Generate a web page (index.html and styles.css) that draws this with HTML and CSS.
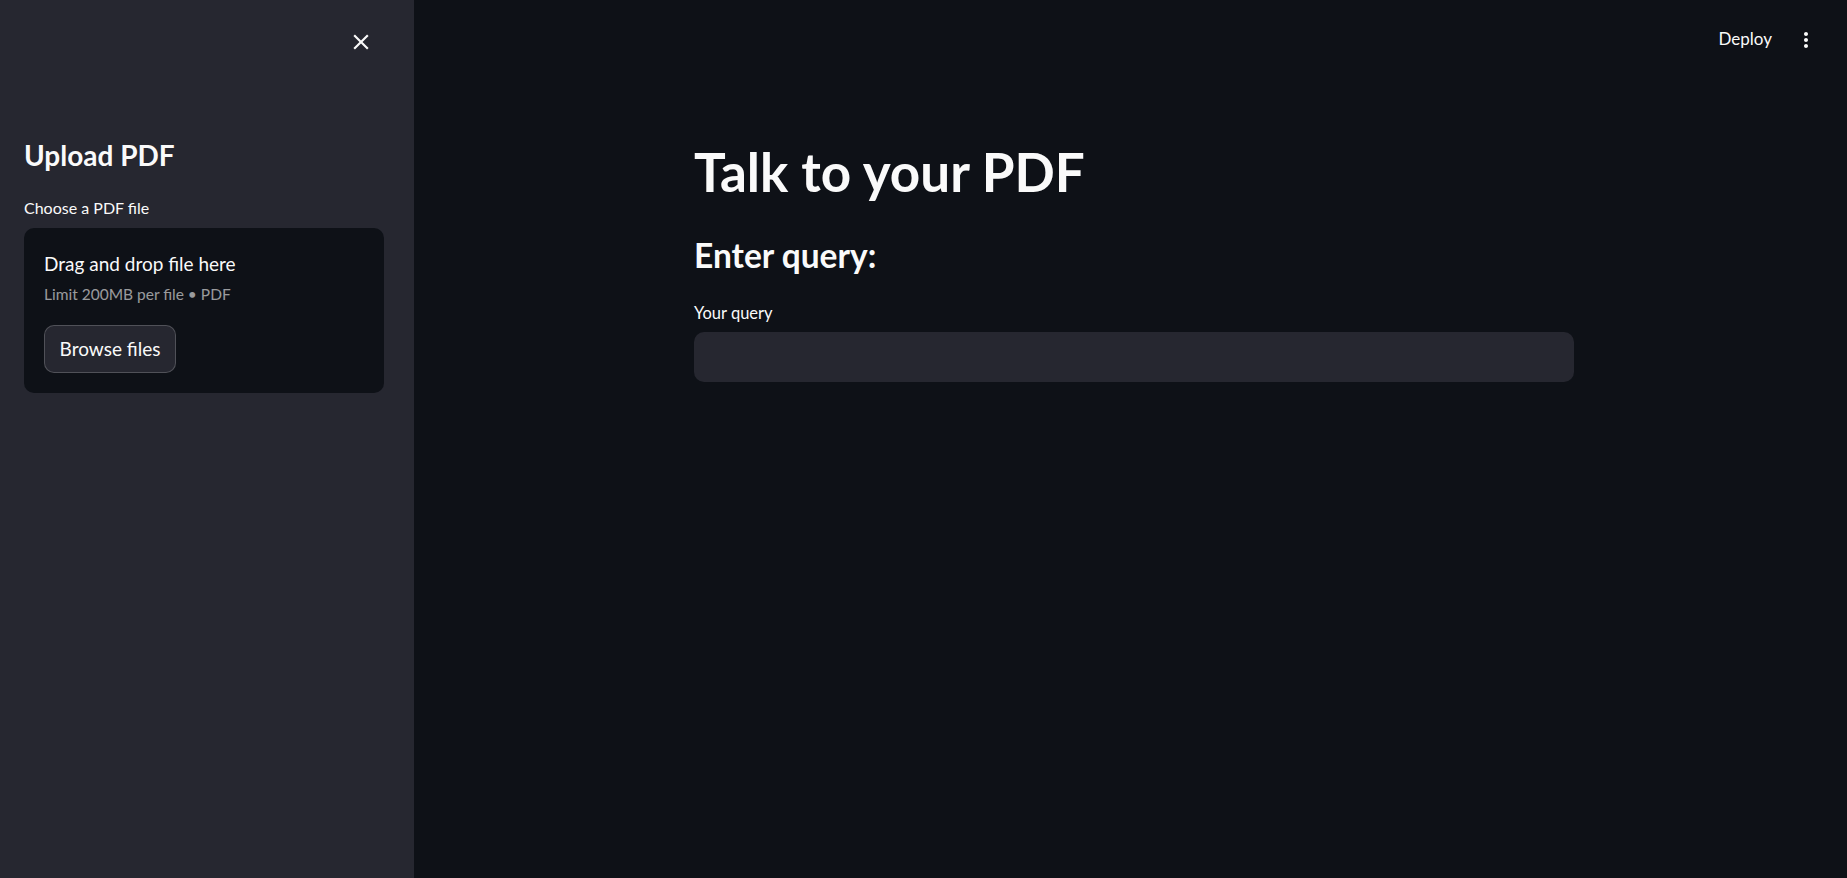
FILE: index.html
```html
<!DOCTYPE html>
<html lang="en">
<head>
<meta charset="utf-8">
<title>Talk to your PDF</title>
<link rel="stylesheet" href="styles.css">
</head>
<body>
<div class="app">
  <aside class="sidebar">
    <div class="sidebar-top">
      <button class="icon-btn close-btn" aria-label="Close sidebar">
        <svg width="26" height="26" viewBox="0 0 24 24"><path fill="#fafafa" d="M19 6.41L17.59 5 12 10.59 6.41 5 5 6.41 10.59 12 5 17.59 6.41 19 12 13.41 17.59 19 19 17.59 13.41 12z"/></svg>
      </button>
    </div>
    <h2 class="side-title">Upload PDF</h2>
    <div class="field-label side-label">Choose a PDF file</div>
    <section class="dropzone">
      <div class="drop-title">Drag and drop file here</div>
      <div class="drop-hint">Limit 200MB per file • PDF</div>
      <button class="browse-btn">Browse files</button>
    </section>
  </aside>
  <main class="main">
    <header class="topbar">
      <span class="deploy">Deploy</span>
      <button class="icon-btn menu-btn" aria-label="Menu">
        <svg width="24" height="24" viewBox="0 0 24 24"><path fill="#fafafa" d="M12 8c1.1 0 2-.9 2-2s-.9-2-2-2-2 .9-2 2 .9 2 2 2zm0 2c-1.1 0-2 .9-2 2s.9 2 2 2 2-.9 2-2-.9-2-2-2zm0 6c-1.1 0-2 .9-2 2s.9 2 2 2 2-.9 2-2-.9-2-2-2z"/></svg>
      </button>
    </header>
    <div class="content">
      <h1 class="title">Talk to your PDF</h1>
      <h3 class="subtitle">Enter query:</h3>
      <div class="field-label query-label">Your query</div>
      <div class="text-input"></div>
    </div>
  </main>
</div>
</body>
</html>
```

FILE: styles.css
```css
* { box-sizing: border-box; }
html, body {
  margin: 0;
  padding: 0;
  height: 100%;
  background: #0e1117;
  color: #fafafa;
  font-family: Lato, "Open Sans", sans-serif;
}
.app {
  display: flex;
  height: 100vh;
  overflow: hidden;
}
.sidebar {
  width: 414px;
  flex: 0 0 414px;
  background: #262730;
  padding: 29px 30px 0 24px;
  display: flex;
  flex-direction: column;
}
.sidebar-top {
  display: flex;
  justify-content: flex-end;
  padding-right: 10px;
  height: 26px;
}
.icon-btn {
  border: 0;
  background: transparent;
  padding: 0;
  margin: 0;
  display: block;
  line-height: 0;
}
.side-title {
  margin: 83px 0 0 0;
  font-size: 28px;
  line-height: 1.25;
  font-weight: 700;
}
.field-label {
  font-size: 16.5px;
  line-height: 1.2;
  font-weight: 400;
}
.side-label {
  margin-top: 25px;
  font-size: 16px;
}
.dropzone {
  margin-top: 11px;
  background: #0e1117;
  border-radius: 10px;
  padding: 24px 20px 20px 20px;
  width: 360px;
}
.drop-title {
  font-size: 19px;
  line-height: 1.25;
}
.drop-hint {
  margin-top: 9px;
  font-size: 15.5px;
  line-height: 1.25;
  color: rgba(250, 250, 250, 0.6);
}
.browse-btn {
  margin-top: 21px;
  height: 48px;
  width: 132px;
  display: flex;
  align-items: center;
  justify-content: center;
  background: #262730;
  border: 1px solid rgba(250, 250, 250, 0.2);
  border-radius: 10px;
  color: #fafafa;
  font-family: inherit;
  font-size: 19px;
  line-height: 1.2;
  padding: 0;
}
.main {
  flex: 1;
  display: flex;
  flex-direction: column;
}
.topbar {
  height: 75px;
  display: flex;
  justify-content: flex-end;
  align-items: flex-start;
  padding: 28px 29px 0 0;
  gap: 22px;
}
.deploy {
  font-size: 17px;
  line-height: 1.2;
  margin-top: 1px;
}
.content {
  margin-top: 65px;
  padding: 0 273px 0 280px;
}
.title {
  margin: 0;
  font-size: 53px;
  line-height: 1.2;
  font-weight: 700;
}
.subtitle {
  margin: 31px 0 0 0;
  font-size: 33.5px;
  line-height: 1.2;
  font-weight: 700;
}
.query-label {
  margin-top: 29px;
}
.text-input {
  margin-top: 8px;
  height: 50px;
  background: #262730;
  border-radius: 10px;
}
```
